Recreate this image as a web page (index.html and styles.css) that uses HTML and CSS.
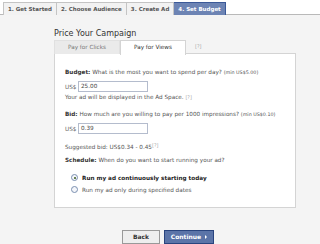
FILE: index.html
```html
<!DOCTYPE html>
<html>
<head>
<meta charset="utf-8">
<link rel="stylesheet" href="styles.css">
</head>
<body>
<div class="steps">
  <div class="step">1. Get Started</div>
  <div class="step">2. Choose Audience</div>
  <div class="step">3. Create Ad</div>
  <div class="step active">4. Set Budget</div>
</div>
<div class="main">
  <h1 class="title">Price Your Campaign</h1>
  <div class="ptabs">
    <div class="ptab">Pay for Clicks</div>
    <div class="ptab sel">Pay for Views</div>
    <span class="help">[?]</span>
  </div>
  <div class="box">
    <div class="q"><b>Budget:</b> What is the most you want to spend per day? <span class="min">(min US$5.00)</span></div>
    <div class="field"><span class="cur">US$</span><span class="input">25.00</span></div>
    <div class="note">Your ad will be displayed in the Ad Space. <span class="help">[?]</span></div>
    <div class="q q2"><b>Bid:</b> How much are you willing to pay per 1000 impressions? <span class="min">(min US$0.10)</span></div>
    <div class="field"><span class="cur">US$</span><span class="input">0.39</span></div>
    <div class="note sug">Suggested bid: US$0.34 - 0.45<sup class="help">[?]</sup></div>
    <div class="q q3"><b>Schedule:</b> When do you want to start running your ad?</div>
    <div class="radios">
      <div class="radio on"><span class="dot"></span><b>Run my ad continuously starting today</b></div>
      <div class="radio"><span class="dot"></span>Run my ad only during specified dates</div>
    </div>
  </div>
  <div class="buttons">
    <div class="btn back">Back</div>
    <div class="btn cont">Continue <span class="arr"></span></div>
  </div>
</div>
</body>
</html>
```

FILE: styles.css
```css
* { box-sizing: border-box; }
html, body { margin: 0; padding: 0; }
body {
  width: 320px;
  height: 244px;
  overflow: hidden;
  background: #f4f4f4;
  font-family: "DejaVu Sans", "Liberation Sans", sans-serif;
  font-size: 5.7px;
  color: #333;
}
.steps {
  display: flex;
  height: 15px;
  padding: 2px 0 0 3px;
  background: #fff;
  border-bottom: 1px solid #b9b9b9;
}
.step {
  height: 13px;
  line-height: 12px;
  padding: 0 4px;
  background: #f2f2f2;
  border: 1px solid #c4c4c4;
  border-bottom: none;
  border-left: none;
  font-weight: bold;
  color: #555;
  font-size: 5.5px;
}
.step:first-child { border-left: 1px solid #c4c4c4; }
.step.active {
  background: #6d84b4;
  border-color: #3b5998;
  color: #fff;
}
.main {
  padding-left: 54px;
  width: 296px;
}
.title {
  margin: 13px 0 0 0;
  font-size: 8px;
  font-weight: normal;
  color: #333;
  height: 12px;
  line-height: 12px;
}
.ptabs {
  display: flex;
  align-items: flex-start;
  height: 14px;
  position: relative;
  z-index: 1;
}
.ptab {
  width: 66px;
  height: 14px;
  line-height: 13px;
  text-align: center;
  background: #eaeaea;
  color: #777;
  border: 1px solid #e0e0e0;
  border-bottom: none;
}
.ptab.sel {
  background: #fff;
  color: #333;
  border-color: #d4d4d4;
  height: 15px;
}
.ptabs .help {
  margin: 3px 0 0 9px;
}
.help {
  color: #aaa;
  font-size: 5px;
}
.box {
  background: #fff;
  border: 1px solid #d4d4d4;
  height: 155px;
  padding: 14px 0 0 10px;
  margin-top: -1px;
}
.q {
  height: 9px;
  line-height: 9px;
  white-space: nowrap;
  color: #555;
}
.q b { color: #333; }
.min { font-size: 4.8px; }
.field {
  display: flex;
  align-items: center;
  margin-top: 4px;
  height: 11px;
}
.cur { color: #666; width: 13px; }
.input {
  width: 70px;
  height: 11px;
  line-height: 9px;
  border: 1px solid #b4bccd;
  padding-left: 2px;
  color: #444;
}
.note {
  margin-top: 1px;
  height: 9px;
  line-height: 9px;
  color: #555;
}
.q2 { margin-top: 8px; }
.sug { margin-top: 7px; }
.sug sup { vertical-align: 2px; }
.q3 { margin-top: 6px; }
.radios { margin-top: 8px; padding-left: 6px; }
.radio {
  display: flex;
  align-items: center;
  height: 9px;
  margin-bottom: 3px;
  color: #555;
}
.radio b { color: #222; }
.dot {
  width: 7px;
  height: 7px;
  border-radius: 50%;
  border: 1px solid #7b8fb0;
  background: #f4f6fa;
  margin-right: 4px;
  position: relative;
}
.radio.on .dot::after {
  content: "";
  position: absolute;
  left: 1.5px;
  top: 1.5px;
  width: 2px;
  height: 2px;
  border-radius: 50%;
  background: #3a5a1a;
}
.buttons {
  display: flex;
  gap: 4px;
  margin: 22px 0 0 68px;
}
.btn {
  height: 14px;
  line-height: 12px;
  font-weight: bold;
  text-align: center;
  font-size: 6px;
}
.back {
  width: 38px;
  background: #eee;
  border: 1px solid #999;
  color: #333;
}
.cont {
  width: 50px;
  background: #5b74a8;
  border: 1px solid #29447e;
  color: #fff;
}
.arr {
  display: inline-block;
  width: 0;
  height: 0;
  border-left: 2px solid #fff;
  border-top: 2px solid transparent;
  border-bottom: 2px solid transparent;
  margin-left: 2px;
  vertical-align: 0;
}
```
